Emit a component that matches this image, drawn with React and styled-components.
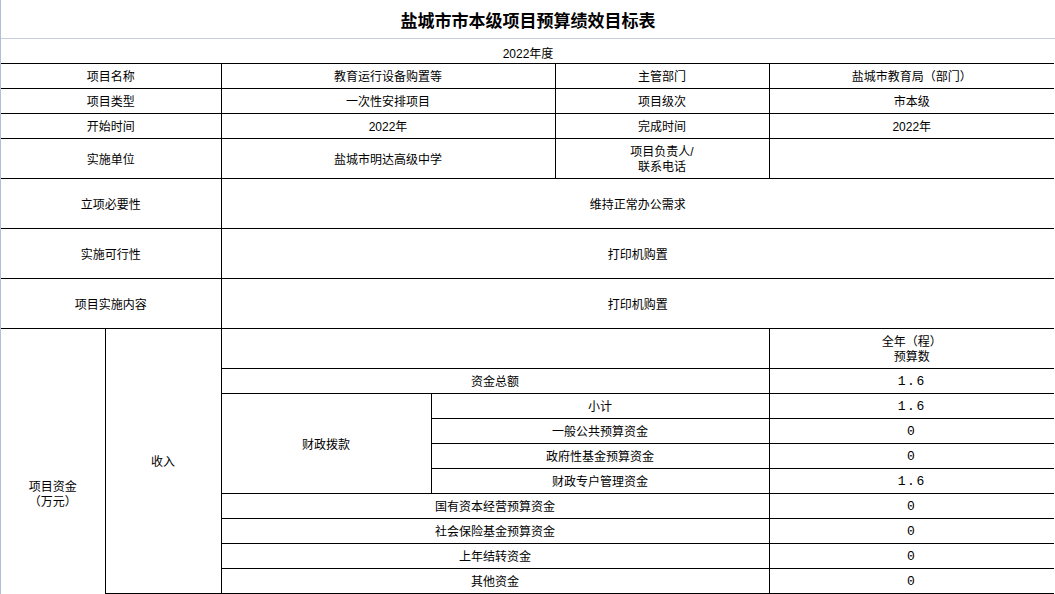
import React from "react";
import styled, { createGlobalStyle } from "styled-components";

const Global = createGlobalStyle`
  html, body { margin: 0; padding: 0; background: #fff; overflow: hidden; }
  body { font-family: "Liberation Sans", "Noto Sans CJK SC", sans-serif; color: #000; }
`;

const Page = styled.div`
  width: 1054px;
  border-left: 1px solid #b3bdd5;
  min-height: 700px;
`;

const Title = styled.h1`
  margin: 0;
  height: 38px;
  display: flex;
  align-items: center;
  justify-content: center;
  font-size: 17px;
  font-weight: bold;
  font-family: "Noto Sans CJK SC", sans-serif;
  border-bottom: 1px solid #c8cde0;
`;

const Year = styled.div`
  height: 24px;
  padding-top: 2px;
  box-sizing: border-box;
  display: flex;
  align-items: center;
  justify-content: center;
  font-size: 12px;
`;

const Table = styled.table`
  border-collapse: collapse;
  table-layout: fixed;
  width: 1053px;
  border-style: solid hidden solid hidden;
  border-width: 1px;
  border-color: #000;
`;

const Row = styled.tr`
  height: ${(p) => p.$h || 25}px;
`;

const Cell = styled.td`
  border: 1px solid #000;
  padding: ${(p) => (p.$mono ? "1px 2px 0" : "3px 2px 0")};
  text-align: center;
  vertical-align: middle;
  font-size: ${(p) => (p.$mono ? 13 : 12)}px;
  line-height: 15px;
  font-family: ${(p) =>
    p.$mono
      ? `"Liberation Mono", "Noto Sans CJK SC", monospace`
      : `"Liberation Sans", "Noto Sans CJK SC", sans-serif`};
  letter-spacing: ${(p) => (p.$mono ? "1.5px" : "0")};
  white-space: nowrap;
  overflow: hidden;
`;

const top = [
  ["项目名称", "教育运行设备购置等", "主管部门", "盐城市教育局（部门）", 25],
  ["项目类型", "一次性安排项目", "项目级次", "市本级", 25],
  ["开始时间", "2022年", "完成时间", "2022年", 25],
  ["实施单位", "盐城市明达高级中学", ["项目负责人/", "联系电话"], "", 40],
];

const wide = [
  ["立项必要性", "维持正常办公需求"],
  ["实施可行性", "打印机购置"],
  ["项目实施内容", "打印机购置"],
];

const Lines = ({ v }) =>
  Array.isArray(v) ? (
    <>
      {v[0]}
      <br />
      {v[1]}
    </>
  ) : (
    v
  );

export default function App() {
  return (
    <Page>
      <Global />
      <Title>盐城市市本级项目预算绩效目标表</Title>
      <Year>2022年度</Year>
      <Table>
        <colgroup>
          <col style={{ width: 104 }} />
          <col style={{ width: 116 }} />
          <col style={{ width: 210 }} />
          <col style={{ width: 124 }} />
          <col style={{ width: 214 }} />
          <col />
        </colgroup>
        <tbody>
          {top.map(([a, b, c, d, h]) => (
            <Row key={a} $h={h}>
              <Cell colSpan={2}>{a}</Cell>
              <Cell colSpan={2}>{b}</Cell>
              <Cell>
                <Lines v={c} />
              </Cell>
              <Cell>{d}</Cell>
            </Row>
          ))}
          {wide.map(([a, b]) => (
            <Row key={a} $h={50}>
              <Cell colSpan={2}>{a}</Cell>
              <Cell colSpan={4}>{b}</Cell>
            </Row>
          ))}
          <Row $h={40}>
            <Cell rowSpan={12}>
              项目资金
              <br />
              （万元）
            </Cell>
            <Cell rowSpan={10}>收入</Cell>
            <Cell colSpan={3}></Cell>
            <Cell>
              全年（程）
              <br />
              预算数
            </Cell>
          </Row>
          <Row>
            <Cell colSpan={3}>资金总额</Cell>
            <Cell $mono>1.6</Cell>
          </Row>
          <Row>
            <Cell rowSpan={4}>财政拨款</Cell>
            <Cell colSpan={2}>小计</Cell>
            <Cell $mono>1.6</Cell>
          </Row>
          <Row>
            <Cell colSpan={2}>一般公共预算资金</Cell>
            <Cell $mono>0</Cell>
          </Row>
          <Row>
            <Cell colSpan={2}>政府性基金预算资金</Cell>
            <Cell $mono>0</Cell>
          </Row>
          <Row>
            <Cell colSpan={2}>财政专户管理资金</Cell>
            <Cell $mono>1.6</Cell>
          </Row>
          <Row>
            <Cell colSpan={3}>国有资本经营预算资金</Cell>
            <Cell $mono>0</Cell>
          </Row>
          <Row>
            <Cell colSpan={3}>社会保险基金预算资金</Cell>
            <Cell $mono>0</Cell>
          </Row>
          <Row>
            <Cell colSpan={3}>上年结转资金</Cell>
            <Cell $mono>0</Cell>
          </Row>
          <Row>
            <Cell colSpan={3}>其他资金</Cell>
            <Cell $mono>0</Cell>
          </Row>
          <Row $h={40}>
            <Cell rowSpan={2}></Cell>
            <Cell colSpan={3}></Cell>
            <Cell></Cell>
          </Row>
          <Row>
            <Cell colSpan={3}></Cell>
            <Cell></Cell>
          </Row>
        </tbody>
      </Table>
    </Page>
  );
}
